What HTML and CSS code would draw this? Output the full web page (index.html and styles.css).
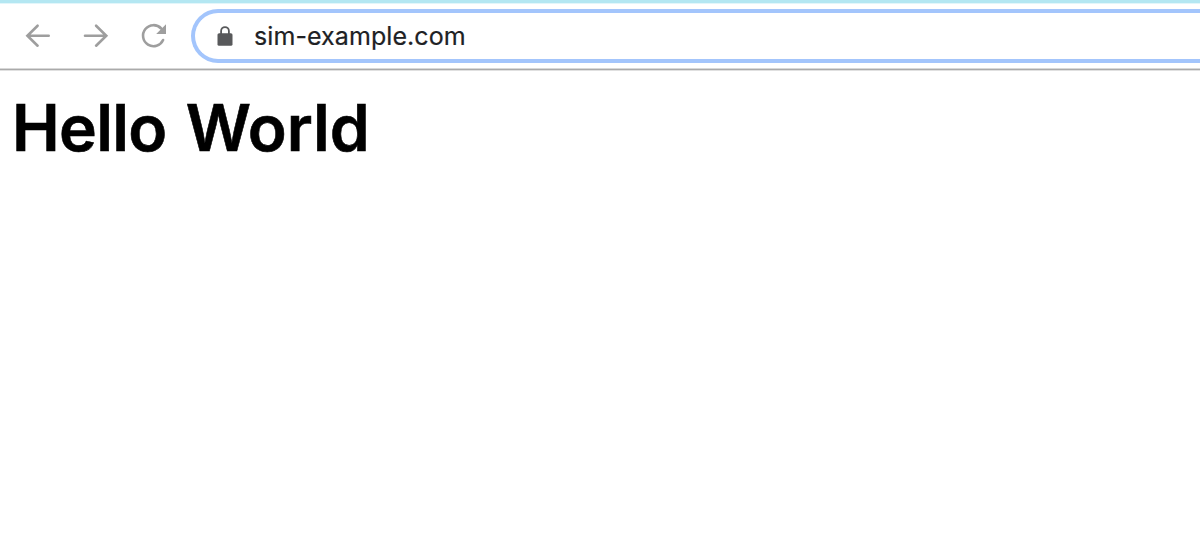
FILE: index.html
```
<!DOCTYPE html>
<html lang="en">

<head>
    <meta charset="UTF-8">
    <title>sim-example.com</title>
    <link rel="stylesheet" href="styles.css">
</head>

<body>
    <header class="toolbar">
        <nav class="buttons">
            <svg class="icon" viewBox="0 0 28 28">
                <path d="M24.7 13.7H3.8M13.6 3.7L3.4 13.7l10.2 10" />
            </svg>
            <svg class="icon" viewBox="0 0 28 28">
                <path d="M3 13.7h20.9M14.1 3.7l10.2 10-10.2 10" />
            </svg>
            <svg class="icon" viewBox="0 0 28 28">
                <path d="M23.1 18A10.5 10.5 0 1 1 21.2 6.5" />
                <path class="fill" d="M26 2.2v9.8h-9.8z" />
            </svg>
        </nav>
        <div class="address">
            <svg class="lock" viewBox="0 0 16 20">
                <rect x=".5" y="7.2" width="15" height="12.6" rx="1.6" />
                <path d="M4.1 8.4V5a3.9 3.9 0 0 1 7.8 0v3.4" />
            </svg>
            <span class="url">sim-example.com</span>
        </div>
    </header>
    <main>
        <h1><span class="first">Hello</span> World</h1>
    </main>
</body>

</html>
```
FILE: styles.css
```
body {
    margin: 0;
    background: #ffffff;
    overflow: hidden;
}

.toolbar {
    box-sizing: border-box;
    display: flex;
    align-items: flex-start;
    height: 70px;
    padding-top: 6px;
    border-top: 3px solid #b4e7f2;
    border-bottom: 1px solid #aaaaaa;
    box-shadow: inset 0 1px #e2f6fa, inset 0 -1px #d8d8d8, 0 1px #e0e0e0;
}

.buttons {
    display: flex;
    gap: 30px;
    padding: 13px 24px 0 24px;
}

.icon {
    width: 28px;
    height: 28px;
    fill: none;
    stroke: #9e9e9e;
    stroke-width: 2.6;
    stroke-linecap: round;
}

.icon .fill {
    fill: #9e9e9e;
    stroke: none;
}

.address {
    box-sizing: border-box;
    display: flex;
    flex: 1;
    align-items: center;
    height: 54px;
    margin-left: -1px;
    padding-left: 22px;
    border: 4px solid #a3c5fc;
    border-right: 0;
    border-radius: 27px 0 0 27px;
}

.lock {
    width: 16px;
    height: 20px;
    margin-right: 21px;
    fill: #58595b;
}

.lock path {
    fill: none;
    stroke: #58595b;
    stroke-width: 1.8;
}

.url {
    font-family: Inter, sans-serif;
    font-size: 25px;
    letter-spacing: 0.08px;
    color: #202124;
    -webkit-text-stroke: 0.2px #202124;
}

h1 {
    margin: 18px 0 0 12px;
    font-family: Inter, sans-serif;
    font-size: 64px;
    font-weight: 600;
    line-height: 80px;
    letter-spacing: 0;
    word-spacing: 3px;
    color: #000000;
    -webkit-text-stroke: 0.6px #000000;
}

h1 .first {
    letter-spacing: -0.7px;
}
```
